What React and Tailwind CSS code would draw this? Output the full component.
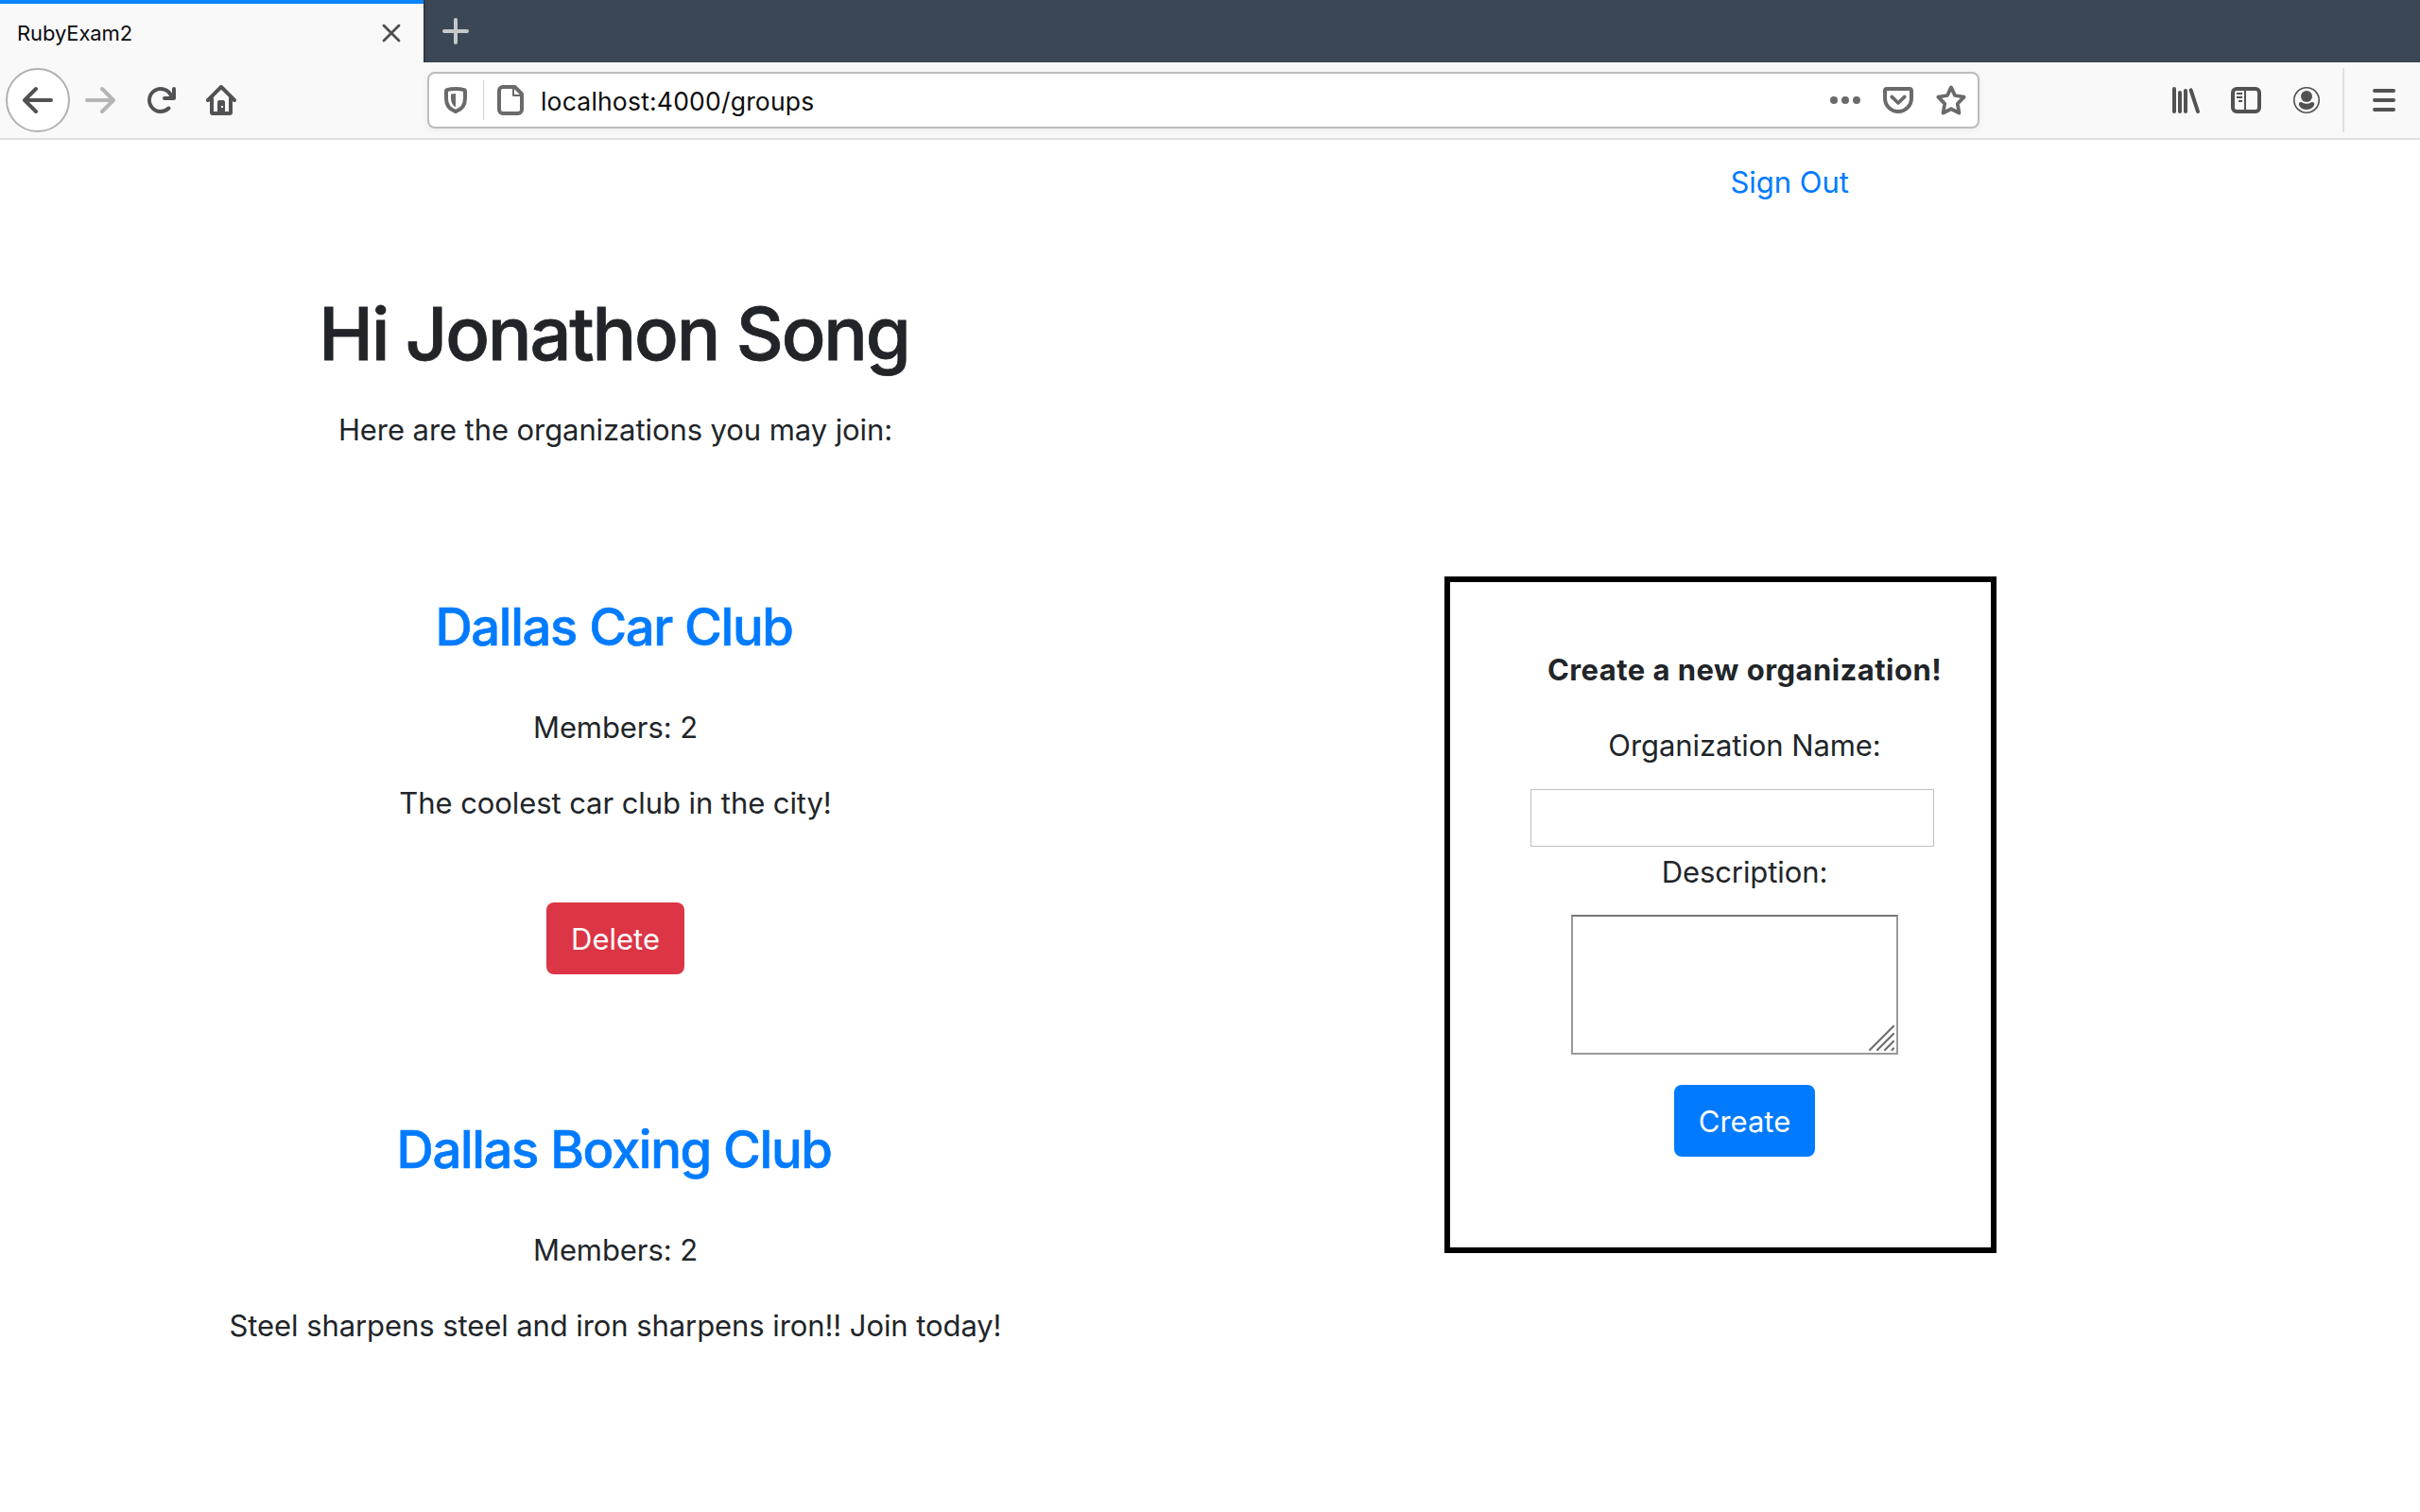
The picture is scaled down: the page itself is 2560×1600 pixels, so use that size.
const Icon = ({ children, className = "" }) => (
  <svg viewBox="0 0 16 16" className={`size-8 shrink-0 ${className}`} fill="none" stroke="none" strokeLinecap="round" strokeLinejoin="round">
    {children}
  </svg>
);

const ARROW =
  "M15 7H3.414l4.293-4.293a1 1 0 0 0-1.414-1.414l-6 6a1 1 0 0 0 0 1.414l6 6a1 1 0 0 0 1.414-1.414L3.414 9H15a1 1 0 0 0 0-2z";

function TabStrip() {
  return (
    <div className="flex h-[66px] bg-[#3b4754]">
      <div className="flex h-[66px] w-[448px] items-center justify-between border-t-4 border-[#0a84ff] bg-[#f9f9fa] pl-[18px] pr-6">
        <span className="text-[22px] leading-[30px] tracking-[-0.1px] text-[#0c0c0d]">RubyExam2</span>
        <svg viewBox="0 0 20 20" className="mb-1 mt-1 size-5" stroke="#4e4e50" strokeWidth="2.8" strokeLinecap="round">
          <path d="M2 2l16 16M18 2L2 18" />
        </svg>
      </div>
      <div className="w-0.5 bg-[#2f3944]" />
      <svg viewBox="0 0 28 28" className="ml-[18px] mt-[19px] size-7" stroke="#c4c8cc" strokeWidth="4" strokeLinecap="round">
        <path d="M14 2v24M2 14h24" />
      </svg>
    </div>
  );
}

function UrlBar() {
  return (
    <div className="ml-[202px] flex h-[60px] w-[1642px] items-center rounded-lg border-2 border-[#bcbcbc] bg-white pl-3 text-[#6a6a6b] shadow-[0_2px_8px_rgba(0,0,0,0.06)]">
      <Icon>
        <path d="M8 2c1.900 0 3.600.3 4.600.6.300.1.400.3.400.5V7c0 3.600-2 6-5 7-3-1-5-3.400-5-7V3.100c0-.2.100-.4.400-.5C4.400 2.300 6.100 2 8 2z" stroke="currentColor" strokeWidth="2" />
        <path d="M5.500 4.900C6.300 4.600 7.100 4.500 8 4.500v7.200C6.300 10.700 5.500 9 5.500 7z" fill="currentColor" />
      </Icon>
      <div className="ml-[13px] h-[42px] w-px bg-[#d2d2d3]" />
      <Icon className="ml-3">
        <path d="M10.300 1H4a2 2 0 0 0-2 2v10a2 2 0 0 0 2 2h8a2 2 0 0 0 2-2V4.700z" stroke="currentColor" strokeWidth="2" />
        <path d="M9.500 1.500v4H14" stroke="currentColor" strokeWidth="1" />
      </Icon>
      <span className="ml-4 pt-px text-[26.5px] leading-8 tracking-[0.2px] text-[#0c0c0d]">localhost:4000/groups</span>
      <div className="ml-auto flex items-center gap-6 pr-3">
        <Icon>
          <path d="M2 8h0M8 8h0M14 8h0" stroke="currentColor" strokeWidth="4" />
        </Icon>
        <Icon>
          <path d="M2 2h12a1 1 0 0 1 1 1v4a7 7 0 0 1-14 0V3a1 1 0 0 1 1-1z" stroke="currentColor" strokeWidth="2" />
          <path d="M4.600 6.200 8 9.500l3.400-3.300" stroke="currentColor" strokeWidth="1.8" />
        </Icon>
        <Icon>
          <path d="M8 1.200l2 4.300 4.800.8-3.400 3.600.8 4.900L8 12.600l-4.200 2.200.8-4.900L1.200 6.300 6 5.500z" stroke="currentColor" strokeWidth="1.9" />
        </Icon>
      </div>
    </div>
  );
}

function Toolbar() {
  return (
    <div className="flex h-[82px] items-center border-b-2 border-[#e0e0e1] bg-[#f9f9fa] pl-1.5 text-[#525254]">
      <div className="flex size-[68px] items-center justify-center rounded-full border-2 border-[#b1b1b2] bg-white">
        <Icon><path d={ARROW} fill="currentColor" /></Icon>
      </div>
      <Icon className="ml-4 -scale-x-100 text-[#b5b5b6]"><path d={ARROW} fill="currentColor" /></Icon>
      <Icon className="ml-8">
        <path d="M15 1a1 1 0 0 0-1 1v2.418A6.995 6.995 0 1 0 8 15a6.954 6.954 0 0 0 4.950-2.050 1 1 0 0 0-1.414-1.414A5.019 5.019 0 1 1 12.549 6H10a1 1 0 0 0 0 2h5a1 1 0 0 0 1-1V2a1 1 0 0 0-1-1z" fill="currentColor" />
      </Icon>
      <Icon className="ml-8">
        <path fillRule="evenodd" fill="currentColor" d="M15.707 7.293l-7-7a1 1 0 0 0-1.414 0l-7 7a1 1 0 0 0 1.414 1.414L2 8.414V14.500A1.500 1.500 0 0 0 3.500 16h9a1.500 1.500 0 0 0 1.500-1.500V8.414l.293.293a1 1 0 0 0 1.414-1.414zM4 14V6.414l4-4 4 4V14h-2V9a1 1 0 0 0-1-1H7a1 1 0 0 0-1 1v5zM8 11h1v1H8z" />
      </Icon>
      <UrlBar />
      <Icon className="ml-[202px]">
        <path d="M2 2v12M5 4v10M8 3v11M10.800 2.700l3.700 11.300" stroke="currentColor" strokeWidth="2" />
      </Icon>
      <Icon className="ml-8">
        <rect x="1" y="2" width="14" height="12" rx="2" stroke="currentColor" strokeWidth="2" />
        <path d="M7 2h1v12H7zM3 4h3v1H3zM3 6h3v1H3zM4 8h2v1H4z" fill="currentColor" />
      </Icon>
      <Icon className="ml-8">
        <circle cx="8" cy="8" r="6.600" stroke="currentColor" strokeWidth="0.8" />
        <circle cx="8" cy="6" r="3" fill="currentColor" />
        <path d="M5 9c.8 0 1.300.9 3 .9S10.200 9 11 9c.7 0 1.100.4 1.100 1 0 1.200-1.600 3-4.100 3s-4.100-1.800-4.100-3c0-.6.400-1 1.100-1z" fill="currentColor" />
      </Icon>
      <div className="ml-[22px] h-[68px] w-0.5 bg-[#e0e0e1]" />
      <Icon className="ml-[26px]">
        <path d="M3 3h10M3 8h10M3 13h10" stroke="currentColor" strokeWidth="2" />
      </Icon>
    </div>
  );
}

const GROUPS = [
  { name: "Dallas Car Club", members: 2, description: "The coolest car club in the city!", owned: true },
  { name: "Dallas Boxing Club", members: 2, description: "Steel sharpens steel and iron sharpens iron!! Join today!", owned: false },
];

function Group({ group }) {
  return (
    <section className="h-[553px]">
      <h2 className="mb-[49px] pr-[3px] text-[54.4px] font-medium leading-[68px] tracking-[-1.36px] text-[#007bff] [-webkit-text-stroke:0.6px_#007bff]">{group.name}</h2>
      <p className="mb-8">Members: {group.members}</p>
      <p className="mb-[81px]">{group.description}</p>
      {group.owned && (
        <button className="h-[76px] w-[146px] rounded-lg bg-[#dc3545] pb-[13px] pt-[15px] tracking-normal text-white">Delete</button>
      )}
    </section>
  );
}

function CreateForm() {
  return (
    <form className="ml-[226px] mt-[393px] flex h-[716px] w-[584px] flex-col items-center border-[6px] border-black pl-[51px] pt-[69px]">
      <p className="mb-8 font-bold tracking-[0.46px]">Create a new organization!</p>
      <label className="mb-[22px]">Organization Name:</label>
      <input className="mb-[3px] mr-[26px] h-[61px] w-[427px] border border-[#c0c0c0] bg-white outline-none" />
      <label className="mb-[21px]">Description:</label>
      <div className="relative mb-8 mr-[21px] h-[148px] w-[346px]">
        <textarea className="block size-full resize-none border-2 border-[#999] border-t-[#767676] bg-white outline-none" />
        <svg viewBox="0 0 28 28" className="absolute bottom-1 right-1 size-7" stroke="#6e6e6e" strokeWidth="2.2" strokeLinecap="round">
          <path d="M2 27L27 2M10 27L27 10M18 27l9-9M25.500 27l1.500-1.500" />
        </svg>
      </div>
      <button type="button" className="h-[76px] w-[149px] rounded-lg bg-[#007bff] pb-[13px] pt-[15px] tracking-normal text-white">Create</button>
    </form>
  );
}

export default function App() {
  return (
    <div className="h-[1600px] w-[2560px] overflow-hidden bg-white font-['Inter',sans-serif] text-[#212529]">
      <TabStrip />
      <Toolbar />
      <div className="text-[31px] leading-[48px] tracking-[-0.08px]">
        <nav className="flex justify-end pr-[604px] pt-[21px]">
          <a className="tracking-normal text-[#007bff]">Sign Out</a>
        </nav>
        <main className="flex items-start">
          <div className="w-[1302px] pt-[88px] text-center">
            <h1 className="mb-[30px] pr-[3px] text-[77.5px] font-medium leading-[96px] tracking-[-2.14px] [-webkit-text-stroke:0.8px_#212529]">Hi Jonathon Song</h1>
            <p className="mb-[150px]">Here are the organizations you may join:</p>
            {GROUPS.map((g) => (
              <Group key={g.name} group={g} />
            ))}
          </div>
          <CreateForm />
        </main>
      </div>
    </div>
  );
}
